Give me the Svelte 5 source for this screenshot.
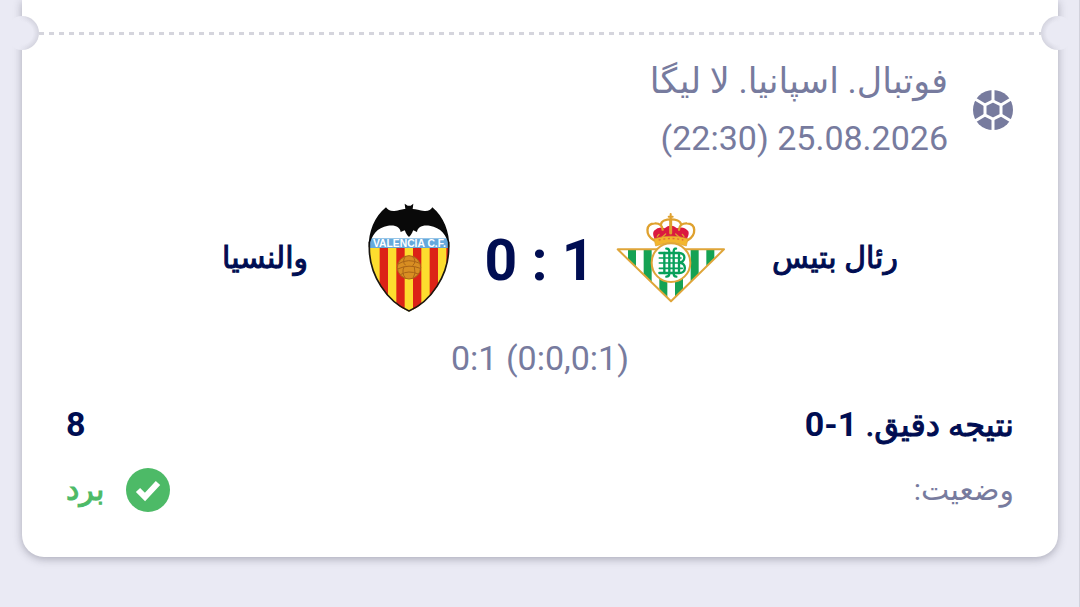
<script lang="ts">
  interface Team {
    id: 'betis' | 'valencia';
    name: string;
  }

  const home: Team = { id: 'betis', name: 'رئال بتیس' };
  const away: Team = { id: 'valencia', name: 'والنسیا' };

  const league = 'فوتبال. اسپانیا. لا لیگا';
  const kickoff = '25.08.2026 (22:30)';
  const score = '0 : 1';
  const periods = '0:1 (0:0,0:1)';
  const bet = { market: 'نتیجه دقیق.', pick: '0-1', odds: '8' };
  const status = { label: 'وضعیت:', value: 'برد' };

  const stripes = [75, 125, 175, 225, 275];
  const bands = [54, 101, 148, 195, 242, 289];
</script>

{#snippet valencia()}
  <svg class="crest valencia" viewBox="-15 0 345 375" role="img" aria-label={away.name}>
    <defs>
      <clipPath id="vcf-shield">
        <path d="M42 158C42 128 52 100 70 84H254C272 100 282 128 282 158C282 240 228 322 162 350C96 322 42 240 42 158Z" />
      </clipPath>
    </defs>
    <g clip-path="url(#vcf-shield)">
      <rect x="36" y="30" width="252" height="325" fill="#fff" />
      <rect x="36" y="158" width="252" height="195" fill="#fddd2e" />
      {#each stripes as x}
        <rect x={x - 1} y="158" width="25" height="195" fill="#dc2317" />
      {/each}
      <rect x="36" y="130" width="252" height="29" fill="#65a9dc" />
    </g>
    <path
      d="M43 140V160C43 240 96 320 162 348C228 320 281 240 281 160V140"
      fill="none" stroke="#1b1712" stroke-width="5"
    />
    <path
      d="M41 158C40 112 58 64 93 37C98 44 106 49 118 48C134 46 142 42 151 42L149 26L158 32H167L175 26L173 42C183 42 194 46 208 48C220 49 228 44 232 37C266 64 284 112 283 158C276 118 257 98 224 92C200 89 188 97 186 111L175 106C172 109 173 116 162 126C151 116 152 109 149 106L137 111C135 97 123 89 99 92C66 98 50 118 41 158Z"
      fill="#090909"
    />
    <text x="163" y="155" class="vcf-name">VALENCIA C.F.</text>
    <circle cx="162" cy="217" r="35" fill="#d88e22" stroke="#a96417" stroke-width="3" />
    <path
      d="M129 207Q160 188 194 205M128 222Q162 206 196 220M136 239Q160 224 190 237M151 184Q140 201 152 211M172 184Q187 198 173 212M147 215Q139 234 151 250M178 216Q184 235 174 250"
      fill="none" stroke="#a96417" stroke-width="3"
    />
  </svg>
{/snippet}

{#snippet betis()}
  <svg class="crest betis" viewBox="0 8 360 330" role="img" aria-label={home.name}>
    <defs>
      <clipPath id="rbb-triangle"><path d="M23 147H342L183 303Z" /></clipPath>
    </defs>
    <g clip-path="url(#rbb-triangle)">
      <rect x="20" y="145" width="325" height="160" fill="#fff" />
      {#each bands as x}
        <rect {x} y="145" width="24" height="160" fill="#15a254" />
      {/each}
    </g>
    <path d="M23 147H342L183 303Z" fill="none" stroke="#dfa539" stroke-width="6" stroke-linejoin="round" />
    <path d="M136 122C132 108 126 101 132 91Q148 76 164 84Q182 67 201 84Q222 76 235 93C239 104 231 112 229 122Q183 109 136 122Z" fill="#db193f" />
    <g fill="none" stroke="#dfa12e" stroke-width="7" stroke-linecap="round">
      <path d="M132 120C104 103 107 70 134 69C148 68 158 76 158 88" />
      <path d="M233 120C261 103 258 70 231 69C217 68 207 76 207 88" />
      <path d="M153 72C155 52 210 52 213 72" />
      <path d="M182 58V98" stroke-width="9" />
      <path d="M182 41V61M176 49H188" stroke-width="6" />
      <path d="M142 108L147 102M167 101L157 110M197 101L207 110M222 108L217 102" stroke-width="4" />
    </g>
    <path d="M132 115Q183 100 234 115L229 137Q183 120 137 137Z" fill="#f3b62d" stroke="#dca033" stroke-width="2" />
    <path d="M146 119Q183 110 220 119" fill="none" stroke="#e4683b" stroke-width="4" stroke-dasharray="6 8" />
    <circle cx="183" cy="187" r="58" fill="#fff" stroke="#dfa539" stroke-width="6" />
    <g fill="none" stroke="#08a05a" stroke-width="7" stroke-linecap="round">
      <path d="M148 158H207C229 158 228 185 207 187C231 190 230 218 207 218H148" />
      <path d="M148 173H213M148 188H218M148 204H217" stroke-width="5" />
      <path d="M163 158V218M207 158V218" />
      <path d="M169 145C176 144 178 149 178 155V219C178 225 174 229 169 229" />
      <path d="M198 145C192 144 191 149 191 155V219C191 225 194 229 199 229" />
    </g>
  </svg>
{/snippet}

<div class="page" dir="rtl">
  <main class="ticket">
    <div class="tear"></div>

    <header class="event">
      <svg class="sport" viewBox="0 0 42 42" aria-hidden="true">
        <circle cx="21" cy="21" r="20" />
        <path d="M21 12L29 16V26L21 30L13 26V16Z" />
        <path d="M21 12V0M29 16L39 10M29 26L39 32M21 30V42M13 26L3 32M13 16L3 10" />
      </svg>
      <div class="event-text">
        <p class="league">{league}</p>
        <p>{kickoff}</p>
      </div>
    </header>

    <section class="match">
      <h2 class="team home heavy">{home.name}</h2>
      {@render betis()}
      <strong class="score" dir="ltr">{score}</strong>
      {@render valencia()}
      <h2 class="team away heavy">{away.name}</h2>
    </section>
    <p class="periods" dir="ltr">{periods}</p>

    <div class="row bet">
      <span><span class="heavy">{bet.market}</span> <bdi dir="ltr">{bet.pick}</bdi></span>
      <span>{bet.odds}</span>
    </div>
    <div class="row status">
      <span class="label">{status.label}</span>
      <span class="won">
        <svg class="check" viewBox="0 0 44 44" aria-hidden="true">
          <circle cx="22" cy="22" r="22" />
          <path d="M12 22L19 29L32 15" />
        </svg>
        <span class="heavy">{status.value}</span>
      </span>
    </div>
  </main>
</div>

<style>
  :global(body) {
    background: #eaeaf4;
  }

  .page {
    min-height: 100vh;
    box-sizing: border-box;
    padding: 0 21px 50px 22px;
    overflow: hidden;
    border-right: 1px solid #d2d2dc;
    font-family: Roboto, 'DejaVu Sans', sans-serif;
    font-size: 34px;
    color: #777b9e;
  }

  .ticket {
    position: relative;
    padding: 0 44px 34px;
    background: #fff;
    border-radius: 0 0 22px 22px;
    box-shadow: 0 2px 8px rgba(50, 50, 70, 0.35);
  }

  p,
  h2 {
    margin: 0;
  }

  .tear {
    height: 35px;
    margin: 0 -27px;
    background: repeating-linear-gradient(to right, #d5d5dd 0 5px, transparent 5px 10px) bottom / 100% 3px no-repeat;
  }

  /* punched notches on both edges of the ticket */
  .ticket::before,
  .ticket::after {
    content: '';
    position: absolute;
    top: 16px;
    width: 34px;
    height: 34px;
    border-radius: 50%;
  }

  .ticket::before {
    left: -17px;
    background:
      linear-gradient(to right, #eaeaf4 14px, transparent 24px),
      radial-gradient(circle, #eaeaf4 11px, #d4d4df 17px);
  }

  .ticket::after {
    right: -17px;
    background:
      linear-gradient(to left, #eaeaf4 14px, transparent 24px),
      radial-gradient(circle, #eaeaf4 11px, #d4d4df 17px);
  }

  .event {
    display: flex;
    align-items: center;
    gap: 24px;
    padding-top: 18px;
    line-height: 57px;
  }

  .league {
    font-size: 35px;
  }

  .sport {
    width: 42px;
    height: 42px;
    fill: #777b9e;
  }

  .sport path {
    fill: none;
    stroke: #fff;
    stroke-width: 3;
  }

  .match {
    display: grid;
    grid-template-columns: 1fr auto 145px auto 1fr;
    align-items: center;
    margin-top: 28px;
    color: #000d52;
  }

  /* Arabic script keeps its regular cut and is thickened by an outline */
  .heavy {
    font-size: 30px;
    font-weight: 400;
    -webkit-text-stroke: 1px currentColor;
  }

  .team {
    line-height: 44px;
    padding: 0 42px;
  }

  .home {
    text-align: left;
  }

  .away {
    text-align: right;
  }

  .crest {
    display: block;
  }

  .betis {
    width: 120px;
    height: 110px;
  }

  .valencia {
    width: 115px;
    height: 125px;
  }

  .vcf-name {
    direction: ltr;
    font: 700 31px 'Liberation Sans', sans-serif;
    fill: #fff;
    text-anchor: middle;
  }

  .score {
    padding-top: 6px;
    padding-left: 4px;
    font-size: 57px;
    line-height: 64px;
    text-align: center;
    white-space: nowrap;
  }

  .periods {
    margin-top: 16px;
    line-height: 44px;
    text-align: center;
  }

  .row {
    display: flex;
    justify-content: space-between;
    align-items: center;
    height: 66px;
    line-height: 66px;
  }

  .bet {
    margin-top: 11px;
    font-weight: 700;
    color: #000d52;
  }

  .bet .heavy {
    font-size: 32px;
  }

  .label {
    font-size: 30px;
  }

  .won {
    display: flex;
    align-items: center;
    gap: 22px;
    color: #4dba67;
  }

  .check {
    width: 44px;
    height: 44px;
    fill: #4dba67;
  }

  .check path {
    fill: none;
    stroke: #fff;
    stroke-width: 6;
  }
</style>
